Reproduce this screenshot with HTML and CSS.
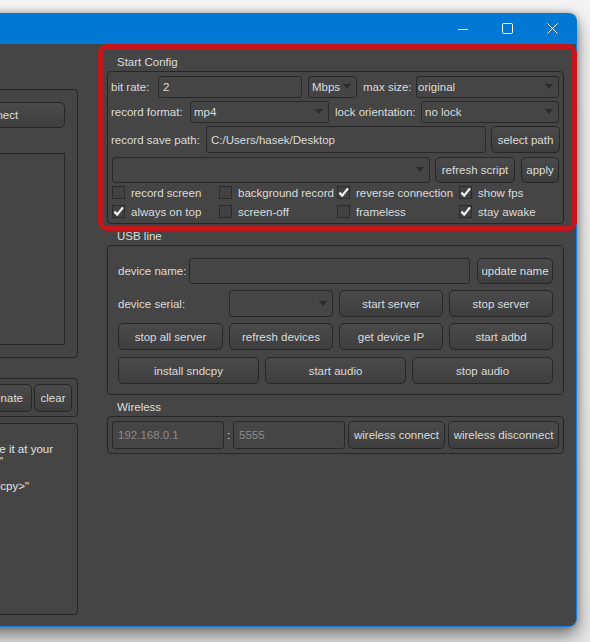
FILE: index.html
```html
<!DOCTYPE html>
<html>
<head>
<meta charset="utf-8">
<title>QtScrcpy</title>
<link rel="stylesheet" href="styles.css">
</head>
<body>
<div class="desktop">
  <div class="window">
    <div class="titlebar">
      <div class="cap-btn"><svg width="10" height="10" viewBox="0 0 10 10"><path d="M0 5.5H10" stroke="#fff" stroke-width="1"/></svg></div>
      <div class="cap-btn"><svg width="11" height="11" viewBox="0 0 11 11"><rect x="0.5" y="0.5" width="10" height="10" rx="1.2" fill="none" stroke="#fff" stroke-width="1"/></svg></div>
      <div class="cap-btn"><svg width="11" height="11" viewBox="0 0 11 11"><path d="M0.5 0.5L10.5 10.5M10.5 0.5L0.5 10.5" stroke="#fff" stroke-width="1"/></svg></div>
    </div>
    <div class="client">
      <div class="left-col">
        <div class="group-title">Device</div>
        <div class="frame dev-frame">
          <div class="conn-row"><button class="btn connect-btn">connect</button></div>
          <div class="list-box"></div>
        </div>
        <div class="frame action-frame">
          <button class="btn term-btn">terminate</button>
          <button class="btn clear-btn">clear</button>
        </div>
        <div class="frame log">
          <div class="log-line end-hidden">sndcpy is not installed on the device</div>
          <div class="log-line end-53">please download sndcpy.apk and place it at your</div>
          <div class="log-line end-3">computer, then run "adb install sndcpy.apk"</div>
          <div class="log-line end-hidden">or start it with the command</div>
          <div class="log-line end-29">"adb push &lt;path to sndcpy&gt;"</div>
        </div>
      </div>

      <div class="right-col">
        <div class="highlight">
          <div class="group-title">Start Config</div>
          <div class="frame config">
            <div class="row h22 gap3">
              <span class="label lw-bitrate">bit rate:</span>
              <div class="field w-bitrate">2</div>
              <div class="combo w-mbps ml6">Mbps</div>
              <span class="label lw-maxsize ml6">max size:</span>
              <div class="combo w-maxsize">original</div>
            </div>
            <div class="row h22 gap3">
              <span class="label lw-format">record format:</span>
              <div class="combo w-format">mp4</div>
              <span class="label lw-lock ml6">lock orientation:</span>
              <div class="combo w-lock">no lock</div>
            </div>
            <div class="row h27 gap4">
              <span class="label lw-path">record save path:</span>
              <div class="field w-path">C:/Users/hasek/Desktop</div>
              <button class="btn w-select ml5">select path</button>
            </div>
            <div class="row h26">
              <div class="combo w-script ml1"></div>
              <button class="btn w-refresh ml5">refresh script</button>
              <button class="btn w-apply ml6">apply</button>
            </div>
            <div class="checks">
              <label class="check"><span class="box"></span>record screen</label>
              <label class="check"><span class="box"></span>background record</label>
              <label class="check"><span class="box on"><svg viewBox="0 0 13 13"><path d="M2.4 6.6L5.2 9.6L11 2.4"/></svg></span>reverse connection</label>
              <label class="check"><span class="box on"><svg viewBox="0 0 13 13"><path d="M2.4 6.6L5.2 9.6L11 2.4"/></svg></span>show fps</label>
              <label class="check"><span class="box on"><svg viewBox="0 0 13 13"><path d="M2.4 6.6L5.2 9.6L11 2.4"/></svg></span>always on top</label>
              <label class="check"><span class="box"></span>screen-off</label>
              <label class="check"><span class="box"></span>frameless</label>
              <label class="check"><span class="box on"><svg viewBox="0 0 13 13"><path d="M2.4 6.6L5.2 9.6L11 2.4"/></svg></span>stay awake</label>
            </div>
          </div>
        </div>

        <div class="group-title">USB line</div>
        <div class="frame usb">
          <div class="row h26 gap6">
            <span class="label lw-devname">device name:</span>
            <div class="field w-devname"></div>
            <button class="btn w-update ml7">update name</button>
          </div>
          <div class="grid4 h27 gap6">
            <span class="label">device serial:</span>
            <div class="combo"></div>
            <button class="btn">start server</button>
            <button class="btn">stop server</button>
          </div>
          <div class="grid4 h27 gap7">
            <button class="btn">stop all server</button>
            <button class="btn">refresh devices</button>
            <button class="btn">get device IP</button>
            <button class="btn">start adbd</button>
          </div>
          <div class="grid3 h27">
            <button class="btn">install sndcpy</button>
            <button class="btn">start audio</button>
            <button class="btn">stop audio</button>
          </div>
        </div>

        <div class="group-title wireless-title">Wireless</div>
        <div class="frame wireless">
          <div class="row h28">
            <div class="field w-ip placeholder">192.168.0.1</div>
            <span class="colon">:</span>
            <div class="field w-port placeholder">5555</div>
            <button class="btn w-wconn ml3">wireless connect</button>
            <button class="btn w-wdisc ml3">wireless disconnect</button>
          </div>
        </div>
      </div>
    </div>
  </div>
</div>
</body>
</html>
```
FILE: styles.css
```css
html, body {
  margin: 0;
  height: 100%;
  overflow: hidden;
}
body {
  background: linear-gradient(#f4f4f4, #e6e6e6);
  font-family: "Liberation Sans", Arial, sans-serif;
  font-size: 11.5px;
  color: #dcdcdc;
}
* { box-sizing: border-box; }

.btn {
  font: inherit;
  color: #dcdcdc;
  height: 100%;
  flex: none;
  border: 1px solid #272727;
  border-radius: 5px;
  background: linear-gradient(#4a4a4a, #3e3e3e);
  padding: 0;
  white-space: nowrap;
  cursor: default;
}

.desktop { padding-top: 13px; }

.window {
  margin-left: -300px;
  width: 877px;
  border-radius: 0 8px 8px 0;
  box-shadow: 0 8px 18px rgba(0, 0, 0, 0.5), 0 0 6px rgba(0, 0, 0, 0.25);
}

.titlebar {
  height: 31px;
  background: #0078d4;
  border-radius: 0 8px 0 0;
  display: flex;
  justify-content: flex-end;
  padding-right: 2px;
}
.cap-btn {
  width: 45px;
  height: 31px;
  display: flex;
  align-items: center;
  justify-content: center;
}
.cap-btn svg { display: block; }

.client {
  height: 583px;
  background: #454545;
  border-right: 1px solid #1a7ed6;
  border-bottom: 1px solid #1a7ed6;
  border-bottom-right-radius: 8px;
  display: flex;
  align-items: flex-start;
  padding-left: 9px;
}

.frame {
  border: 1px solid #272727;
  border-radius: 4px;
}
.group-title {
  height: 18px;
  line-height: 18px;
  padding-left: 10px;
  white-space: nowrap;
}

/* ---------- left column ---------- */
.left-col {
  width: 369px;
  display: flex;
  flex-direction: column;
}
.left-col > .group-title { margin-top: 27px; }
.dev-frame { padding: 12px; }
.conn-row { display: flex; justify-content: flex-end; height: 26px; }
.connect-btn { width: 134px; }
.list-box {
  margin-top: 25px;
  height: 192px;
  border: 1px solid #272727;
}
.action-frame {
  margin-top: 20px;
  height: 39px;
  padding: 5px 5px 4px;
  display: flex;
  justify-content: flex-end;
  gap: 2px;
}
.term-btn { width: 66px; }
.clear-btn { width: 38px; }
.log {
  margin-top: 6px;
  height: 192px;
  padding-top: 6px;
  line-height: 12.5px;
  color: #e2e2e2;
}
.log-line { white-space: nowrap; text-align: right; }
.end-hidden { padding-right: 95px; }
.end-53 { padding-right: 24px; }
.end-3 { padding-right: 74px; }
.end-29 { padding-right: 48px; }

/* ---------- right column ---------- */
.right-col {
  width: 457px;
  margin-left: 29px;
  display: flex;
  flex-direction: column;
}
.highlight {
  margin: 0 -13px -4px -9px;
  border: 5px solid #c5161c;
  border-radius: 9px;
  padding: 4px 8px 2px 4px;
  position: relative;
}

.config { padding: 4px 4px 2px 3px; }
.usb { padding: 12px 10px 10px 10px; }
.wireless-title { margin-top: 3px; }
.wireless { padding: 4px; }

.row { display: flex; align-items: center; }
.h22 { height: 22px; }
.h26 { height: 26px; }
.h27 { height: 27px; }
.h28 { height: 28px; }
.gap3 { margin-bottom: 3px; }
.gap4 { margin-bottom: 4px; }
.gap6 { margin-bottom: 6px; }
.gap7 { margin-bottom: 7px; }
.ml1 { margin-left: 1px; }
.ml3 { margin-left: 3px; }
.ml5 { margin-left: 5px; }
.ml6 { margin-left: 6px; }
.ml7 { margin-left: 7px; }

.label {
  white-space: nowrap;
  display: flex;
  align-items: center;
  height: 100%;
  flex: none;
}

.field, .combo {
  height: 100%;
  flex: none;
  border: 1px solid #292929;
  border-radius: 3px;
  background: #454545;
  padding-left: 3px;
  display: flex;
  align-items: center;
  white-space: nowrap;
  position: relative;
}
.combo::after {
  content: "";
  position: absolute;
  right: 5px;
  top: 50%;
  margin-top: -3px;
  border-left: 4.5px solid transparent;
  border-right: 4.5px solid transparent;
  border-top: 5px solid #2c2c2c;
}
.placeholder { color: #8c8c8c; padding-left: 5px; }

/* row 1 */
.lw-bitrate { width: 47px; }
.w-bitrate { width: 144px; padding-left: 4px; }
.w-mbps { width: 49px; }
.lw-maxsize { width: 53px; }
.w-maxsize { width: 143px; padding-left: 1px; }
/* row 2 */
.lw-format { width: 79px; }
.w-format { width: 139px; }
.lw-lock { width: 86px; }
.w-lock { width: 138px; }
/* row 3 */
.lw-path { width: 95px; }
.w-path { width: 280px; padding-left: 4px; }
.w-select { width: 69px; }
/* row 4 */
.w-script { width: 318px; }
.w-refresh { width: 80px; }
.w-apply { width: 38px; }

.checks {
  display: grid;
  grid-template-columns: 107px 118px 122px 1fr;
  grid-auto-rows: 19px;
  padding-left: 1px;
}
.check {
  display: flex;
  align-items: center;
  gap: 6px;
  white-space: nowrap;
}
.box {
  width: 13px;
  height: 13px;
  flex: none;
  border: 1px solid #2b2b2b;
  background: #424242;
  position: relative;
}
.box svg {
  position: absolute;
  left: -1px;
  top: -1px;
  width: 13px;
  height: 13px;
  fill: none;
  stroke: #f2f2f2;
  stroke-width: 2.3;
}

/* usb */
.lw-devname { width: 71px; }
.w-devname { width: 281px; }
.w-update { width: 76px; }
.grid4 {
  display: grid;
  grid-template-columns: 105px 104px 104px 104px;
  column-gap: 6px;
  align-items: center;
}
.grid3 {
  display: grid;
  grid-template-columns: repeat(3, 141px);
  column-gap: 6px;
}

/* wireless */
.w-ip { width: 112px; }
.colon { width: 9px; text-align: center; flex: none; }
.w-port { width: 112px; }
.w-wconn { width: 97px; }
.w-wdisc { width: 111px; }
```
